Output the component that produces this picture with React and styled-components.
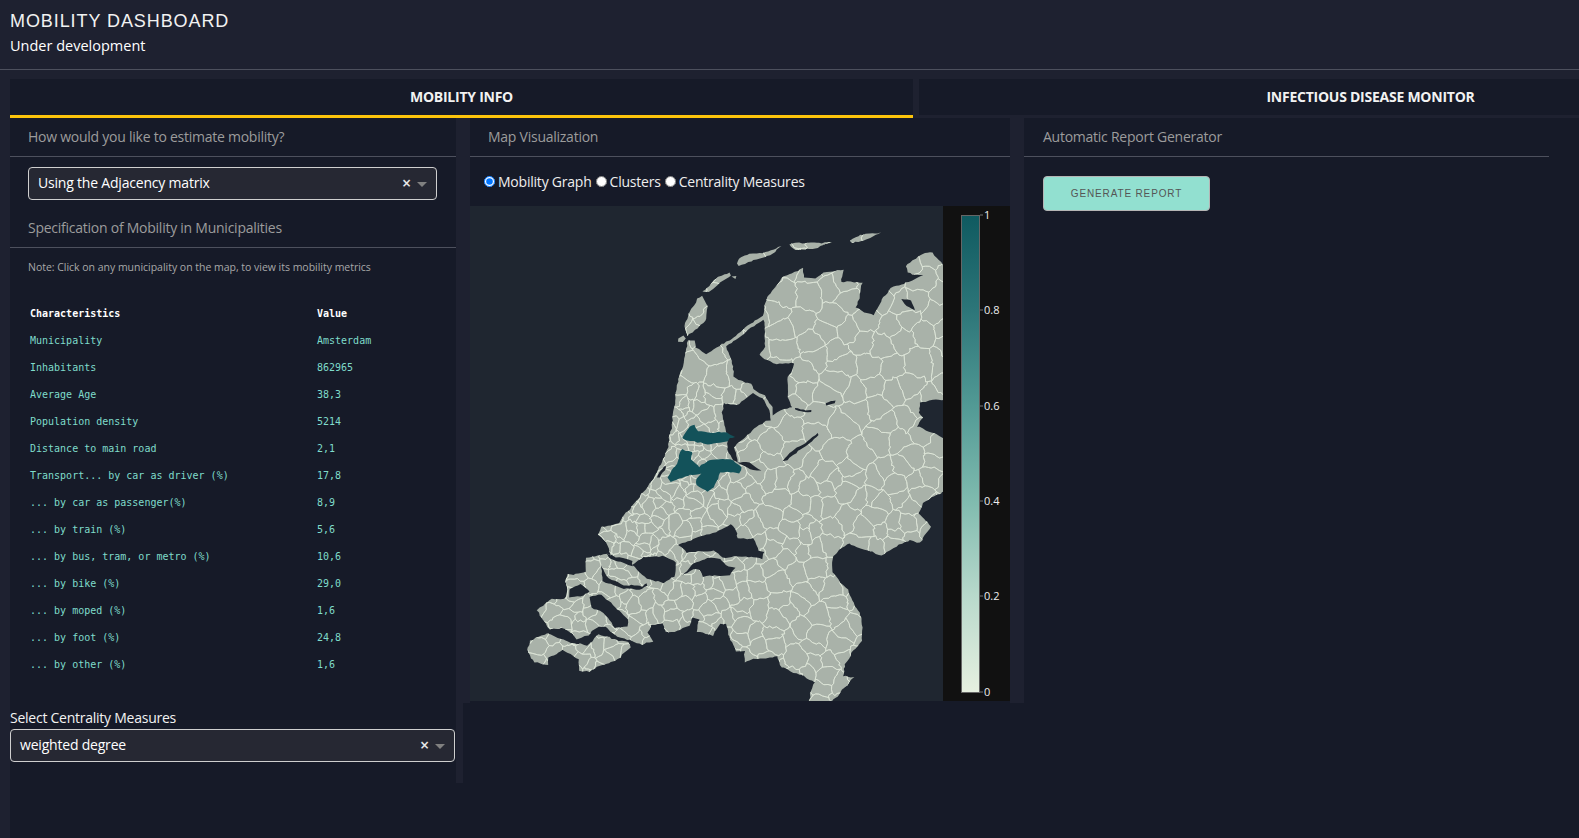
import React from 'react'
import styled, { createGlobalStyle } from 'styled-components'

const GlobalStyle = createGlobalStyle`
  html, body {
    margin: 0;
    height: 100%;
    overflow: hidden;
    background: #1e2130;
  }
  * { box-sizing: border-box; }
`

const Page = styled.div`
  width: 1579px;
  height: 838px;
  overflow: hidden;
  background: #1e2130;
  color: #fff;
  font-family: 'Open Sans', sans-serif;
`

const Banner = styled.header`
  height: 70px;
  padding: 11px 10px 0;
  border-bottom: 1px solid #4d505d;
`

const Title = styled.h1`
  margin: 0;
  font-family: 'Liberation Sans', Arial, sans-serif;
  font-size: 18px;
  font-weight: 400;
  line-height: 20px;
  letter-spacing: 0.92px;
  color: #f2f2f2;
`

const Subtitle = styled.p`
  margin: 5px 0 0;
  font-size: 14.5px;
  line-height: 19px;
`

const Board = styled.div`
  height: 768px;
  margin: 9px 0 0 10px;
  background: #161a28;
`

const Tabs = styled.div`
  display: flex;
  width: 1812px;
  gap: 6px;
  background: #1e2130;
`

const Tab = styled.div`
  width: 903px;
  height: 39px;
  border-bottom: 3px solid ${(p) => (p.$active ? '#fcc40b' : '#1e2130')};
  background: #161a28;
  background-clip: padding-box;
  font-size: 14px;
  font-weight: 700;
  line-height: 35px;
  text-align: center;
  color: #f2f2f2;
  letter-spacing: -0.25px;
`

const Columns = styled.div`
  display: flex;
  align-items: flex-start;
`

const LeftColumn = styled.section`
  width: 453px;
  height: 665px;
  border-right: 7px solid #1e2130;
`

const MiddleColumn = styled.section`
  width: 561px;
  height: 585px;
  border-left: 7px solid #1e2130;
  border-right: 14px solid #1e2130;
`

const RightColumn = styled.section`
  width: 525px;
`

const SectionTitle = styled.div`
  height: 39px;
  padding-left: ${(p) => p.$inset || 18}px;
  border-bottom: 1px solid #4d505d;
  font-size: 14px;
  line-height: 37px;
  letter-spacing: -0.25px;
  color: #9c9c9c;
`

const SelectBox = styled.div`
  display: flex;
  align-items: center;
  height: 33px;
  padding: 0 9px 2px;
  border: 1px solid #cfcfcf;
  border-radius: 4px;
  background: #262833;
  font-size: 14px;
  letter-spacing: -0.2px;
  color: #fff;
`

const MethodSelect = styled(SelectBox)`
  width: 409px;
  margin: 10px 0 9px 18px;
`

const SelectValue = styled.span`
  flex: 1;
`

const ClearMark = styled.span`
  font-size: 16px;
  font-weight: 600;
  line-height: 16px;
  margin-right: 3px;
  color: #e8e8e8;
`

const Caret = styled.span`
  width: 0;
  height: 0;
  margin: 3px 0 0 3px;
  border-left: 5px solid transparent;
  border-right: 5px solid transparent;
  border-top: 5px solid #808080;
`

const Note = styled.p`
  margin: 0;
  padding: 12px 0 0 18px;
  font-size: 10.5px;
  line-height: 15px;
  letter-spacing: -0.02px;
  color: #a8a8a8;
`

const MetricsTable = styled.table`
  margin: 25px 0 0 20px;
  border-collapse: collapse;
  font-family: 'DejaVu Sans Mono', monospace;
  font-size: 10px;
`

const MetricCell = styled.td`
  width: ${(p) => p.$width}px;
  height: 27px;
  padding: 0;
  color: ${(p) => (p.$head ? '#ffffff' : '#7fdccb')};
  font-weight: ${(p) => (p.$head ? 700 : 400)};
`

const FieldLabel = styled.label`
  display: block;
  margin-top: 30px;
  font-size: 14px;
  line-height: 19px;
  letter-spacing: -0.25px;
  color: #f2f2f2;
`

const CentralitySelect = styled(SelectBox)`
  width: 445px;
  margin-top: 2px;
`

const RadioRow = styled.div`
  display: flex;
  align-items: center;
  height: 49px;
  padding-left: 14px;
  font-size: 14px;
  letter-spacing: -0.22px;
  color: #eee;
`

const RadioLabel = styled.label`
  display: flex;
  align-items: center;
  margin-right: 4px;
`

const Radio = styled.input`
  width: 11px;
  height: 11px;
  margin: 0 3px 0 0;
`

const MapFigure = styled.svg`
  display: block;
  width: 540px;
  height: 495px;
`

const GenerateButton = styled.button`
  display: block;
  width: 167px;
  height: 35px;
  margin: 19px 0 0 19px;
  border: 1px solid #b5b5b5;
  border-radius: 4px;
  background: #92e0d0;
  font-family: 'Liberation Sans', Arial, sans-serif;
  font-size: 10px;
  letter-spacing: 0.85px;
  color: #555;
`

const rows = [
  ['Municipality', 'Amsterdam'],
  ['Inhabitants', '862965'],
  ['Average Age', '38,3'],
  ['Population density', '5214'],
  ['Distance to main road', '2,1'],
  ['Transport... by car as driver (%)', '17,8'],
  ['... by car as passenger(%)', '8,9'],
  ['... by train (%)', '5,6'],
  ['... by bus, tram, or metro (%)', '10,6'],
  ['... by bike (%)', '29,0'],
  ['... by moped (%)', '1,6'],
  ['... by foot (%)', '24,8'],
  ['... by other (%)', '1,6'],
]

// Map outlines, in page coordinates
const mainland = [
  [687, 340], [696, 340], [697, 347], [705, 353], [722, 345], [725, 345], [762, 316], [767, 298],
  [783, 277], [803, 268], [805, 277], [815, 278], [823, 273], [844, 270], [842, 283], [862, 282],
  [857, 307], [873, 315], [878, 307], [883, 297], [890, 287], [910, 283], [923, 275], [907, 272],
  [905, 265], [925, 253], [933, 252], [945, 267], [945, 400], [920, 402], [920, 413], [923, 417],
  [917, 427], [945, 439], [945, 490], [923, 502], [917, 513], [932, 527], [920, 542], [910, 540],
  [890, 550], [882, 555], [867, 550], [857, 548], [850, 543], [833, 555], [833, 572], [840, 583],
  [848, 590], [860, 613], [862, 640], [845, 663], [843, 677], [855, 677], [832, 703], [808, 703],
  [815, 682], [807, 677], [793, 672], [783, 667], [777, 655], [757, 660], [745, 662], [745, 652],
  [735, 652], [730, 640], [727, 623], [720, 623], [712, 636], [697, 632], [700, 620], [693, 617],
  [690, 627], [677, 630], [665, 632], [663, 622], [653, 625], [648, 633], [653, 642], [642, 644],
  [633, 641], [615, 635], [607, 627], [598, 626], [588, 636], [577, 638], [565, 628], [550, 628],
  [537, 610], [552, 599], [565, 598], [568, 590], [566, 582], [568, 574], [585, 572], [587, 558],
  [603, 553], [610, 555], [607, 545], [599, 535], [602, 527], [618, 523], [625, 513], [643, 493],
  [657, 473], [667, 450], [670, 430], [678, 383], [686, 357],
]

const islands = [
  [[702, 297], [708, 307], [707, 317], [700, 328], [687, 336], [684, 327], [688, 313], [697, 300]],
  [[678, 337], [682, 335], [685, 338], [682, 342], [678, 341]],
  [[702, 292], [713, 280], [730, 273], [732, 276], [720, 283], [708, 292]],
  [[733, 276], [737, 275], [736, 278]],
  [[737, 263], [742, 257], [782, 247], [773, 253], [740, 266]],
  [[790, 245], [795, 242], [832, 243], [813, 248], [795, 251]],
  [[850, 239], [855, 236], [881, 233], [867, 239], [853, 243]],
  [[530, 640], [548, 634], [563, 640], [587, 645], [598, 635], [613, 639], [628, 642], [630, 647],
    [620, 657], [600, 667], [590, 672], [578, 670], [578, 660], [563, 650], [548, 657], [547, 665],
    [535, 663], [528, 650]],
]

const waters = [
  [[727, 347], [763, 319], [765, 330], [765, 347], [760, 355], [773, 363], [795, 363], [788, 380],
    [788, 397], [792, 407], [783, 409], [773, 415], [773, 408], [764, 396], [754, 390], [752, 383],
    [743, 382], [733, 377], [732, 360]],
  [[753, 394], [762, 399], [770, 411], [771, 420], [767, 420], [740, 440], [733, 448], [738, 462],
    [733, 460], [727, 450], [727, 430], [722, 413], [723, 403], [737, 405]],
  [[738, 462], [750, 463], [760, 471], [756, 471], [745, 466]],
  [[783, 460], [795, 449], [817, 433], [818, 435], [798, 451], [788, 460]],
  [[795, 408], [812, 410], [812, 412], [795, 410]],
  [[825, 404], [835, 400], [835, 403], [826, 406]],
  [[902, 298], [911, 300], [914, 309], [907, 306]],
  [[657, 478], [664, 466], [667, 465], [661, 478]],
  [[632, 565], [643, 558], [663, 555], [675, 562], [675, 577], [663, 583], [647, 578]],
  [[605, 553], [632, 561], [632, 566], [608, 557]],
  [[677, 545], [690, 540], [713, 533], [730, 524], [737, 530], [738, 538], [753, 538], [758, 550],
    [765, 552], [762, 559], [745, 557], [723, 557], [713, 550], [687, 553]],
  [[683, 575], [692, 565], [707, 558], [720, 558], [727, 565], [735, 567], [730, 576], [703, 576],
    [700, 570], [693, 569]],
  [[590, 597], [602, 595], [615, 607], [628, 620], [628, 627], [615, 627], [603, 613], [592, 607]],
  [[570, 590], [580, 584], [590, 592], [580, 597], [569, 597]],
  [[600, 565], [607, 577], [623, 586], [643, 586], [647, 582], [648, 585], [640, 590], [623, 589],
    [603, 581]],
]

const highlighted = [
  [[683, 437], [690, 427], [695, 425], [698, 432], [710, 433], [728, 432], [732, 435], [735, 437],
    [730, 438], [727, 442], [717, 443], [708, 445], [700, 442], [687, 440]],
  [[682, 450], [692, 452], [690, 460], [700, 468], [710, 460], [722, 458], [733, 460], [742, 467],
    [740, 473], [727, 472], [720, 473], [713, 487], [707, 492], [697, 485], [697, 478], [702, 473],
    [690, 475], [670, 482], [668, 478], [677, 463]],
]

const wobble = (x, y) => [
  Math.sin(x * 0.17 + y * 0.09) * 1.2 + Math.sin(x * 0.41 - y * 0.23) * 0.8 + Math.sin(y * 0.93 + x * 0.31) * 0.5 + Math.sin(x * 1.9 + y * 1.3) * 0.5,
  Math.sin(y * 0.19 - x * 0.11) * 1.2 + Math.sin(y * 0.37 + x * 0.29) * 0.8 + Math.sin(x * 0.87 - y * 0.33) * 0.5 + Math.sin(y * 1.7 - x * 1.4) * 0.5,
]

// Closed polygon to a path, edges split up and shaken so they look hand-surveyed
const polygonPath = (points, amount = 1, step = 4) => {
  let d = ''
  points.forEach((a, i) => {
    const b = points[(i + 1) % points.length]
    const n = Math.max(1, Math.round(Math.hypot(b[0] - a[0], b[1] - a[1]) / step))
    for (let k = 0; k < n; k++) {
      const x = a[0] + ((b[0] - a[0]) * k) / n
      const y = a[1] + ((b[1] - a[1]) * k) / n
      const [dx, dy] = wobble(x, y)
      d += `${d ? 'L' : 'M'}${(x + dx * amount).toFixed(1)} ${(y + dy * amount).toFixed(1)}`
    }
  })
  return d + 'Z'
}

const makeRandom = (seed) => () => {
  seed = (seed + 0x6d2b79f5) | 0
  let t = Math.imul(seed ^ (seed >>> 15), 1 | seed)
  t = (t + Math.imul(t ^ (t >>> 7), 61 | t)) ^ t
  return ((t ^ (t >>> 14)) >>> 0) / 4294967296
}

const spacingAt = (x, y) => {
  if (x < 700 && y > 390 && y < 560) return 8
  if (x < 745 && y > 390) return 12
  if (y > 470) return 17
  return 24
}

// Municipal borders: a Voronoi split of the land
const municipalityBorders = () => {
  const random = makeRandom(71)
  const sites = []
  for (let i = 0; i < 12000; i++) {
    const x = 520 + random() * 430
    const y = 225 + random() * 485
    const r = spacingAt(x, y) * (0.6 + random() * 0.9)
    if (sites.every((s) => Math.hypot(s[0] - x, s[1] - y) > r)) sites.push([x, y])
  }
  return sites
    .map((site) => {
      let cell = [[500, 200], [960, 200], [960, 720], [500, 720]]
      sites.forEach((other) => {
        if (other === site) return
        const mx = (site[0] + other[0]) / 2
        const my = (site[1] + other[1]) / 2
        const nx = other[0] - site[0]
        const ny = other[1] - site[1]
        const side = (p) => (p[0] - mx) * nx + (p[1] - my) * ny
        const next = []
        cell.forEach((p, i) => {
          const q = cell[(i + 1) % cell.length]
          const sp = side(p)
          const sq = side(q)
          if (sp <= 0) next.push(p)
          if (sp * sq < 0) {
            const t = sp / (sp - sq)
            next.push([p[0] + (q[0] - p[0]) * t, p[1] + (q[1] - p[1]) * t])
          }
        })
        cell = next
      })
      return polygonPath(cell, 1.3, 3)
    })
    .join('')
}

const landPath = [mainland, ...islands].map((p) => polygonPath(p, 0.6, 3)).join('')
const waterPath = waters.map((p) => polygonPath(p, 0.5, 3)).join('')
const highlightPath = highlighted.map((p) => polygonPath(p, 0.5, 3)).join('')
const borderPath = municipalityBorders()

const ticks = [
  ['1', 215],
  ['0.8', 310],
  ['0.6', 406],
  ['0.4', 501],
  ['0.2', 596],
  ['0', 692],
]

const MobilityMap = () => (
  <MapFigure viewBox="470 206 540 495">
    <defs>
      <clipPath id="land">
        <path d={landPath} />
      </clipPath>
      <linearGradient id="scale" x1="0" y1="1" x2="0" y2="0">
        <stop offset="0" stopColor="#e6f0e0" />
        <stop offset="0.2" stopColor="#b9d9cc" />
        <stop offset="0.4" stopColor="#80bbaf" />
        <stop offset="0.6" stopColor="#529a95" />
        <stop offset="0.8" stopColor="#2d7679" />
        <stop offset="1" stopColor="#0f5a60" />
      </linearGradient>
    </defs>
    <rect x="470" y="206" width="473" height="495" fill="#1f2630" />
    <path d={landPath} fill="#a9b2a9" />
    <g clipPath="url(#land)">
      <path d={borderPath} fill="none" stroke="#dfe7da" strokeWidth="0.75" />
      <path d={waterPath} fill="#1f2630" />
    </g>
    <path d={highlightPath} fill="#13525a" />
    <rect x="943" y="206" width="67" height="495" fill="#111111" />
    <rect x="961.5" y="215.5" width="18" height="477" fill="url(#scale)" stroke="#666" />
    {ticks.map(([label, y]) => (
      <g key={label}>
        <line x1="980" x2="983" y1={y} y2={y} stroke="#777" />
        <text x="984" y={y + 4} fontSize="11" fontFamily="'Open Sans', sans-serif" fill="#eeeeee">
          {label}
        </text>
      </g>
    ))}
  </MapFigure>
)

const App = () => (
  <Page>
    <GlobalStyle />
    <Banner>
      <Title>MOBILITY DASHBOARD</Title>
      <Subtitle>Under development</Subtitle>
    </Banner>
    <Board>
      <Tabs>
        <Tab $active>MOBILITY INFO</Tab>
        <Tab>INFECTIOUS DISEASE MONITOR</Tab>
      </Tabs>
      <Columns>
        <LeftColumn>
          <SectionTitle>How would you like to estimate mobility?</SectionTitle>
          <MethodSelect>
            <SelectValue>Using the Adjacency matrix</SelectValue>
            <ClearMark>×</ClearMark>
            <Caret />
          </MethodSelect>
          <SectionTitle>Specification of Mobility in Municipalities</SectionTitle>
          <Note>Note: Click on any municipality on the map, to view its mobility metrics</Note>
          <MetricsTable>
            <tbody>
              <tr>
                <MetricCell $head $width={287}>Characteristics</MetricCell>
                <MetricCell $head $width={100}>Value</MetricCell>
              </tr>
              {rows.map(([name, value]) => (
                <tr key={name}>
                  <MetricCell $width={287}>{name}</MetricCell>
                  <MetricCell $width={100}>{value}</MetricCell>
                </tr>
              ))}
            </tbody>
          </MetricsTable>
          <FieldLabel>Select Centrality Measures</FieldLabel>
          <CentralitySelect>
            <SelectValue>weighted degree</SelectValue>
            <ClearMark>×</ClearMark>
            <Caret />
          </CentralitySelect>
        </LeftColumn>
        <MiddleColumn>
          <SectionTitle $inset={18}>Map Visualization</SectionTitle>
          <RadioRow>
            <RadioLabel>
              <Radio type="radio" name="view" defaultChecked />
              Mobility Graph
            </RadioLabel>
            <RadioLabel>
              <Radio type="radio" name="view" />
              Clusters
            </RadioLabel>
            <RadioLabel>
              <Radio type="radio" name="view" />
              Centrality Measures
            </RadioLabel>
          </RadioRow>
          <MobilityMap />
        </MiddleColumn>
        <RightColumn>
          <SectionTitle $inset={19}>Automatic Report Generator</SectionTitle>
          <GenerateButton>GENERATE REPORT</GenerateButton>
        </RightColumn>
      </Columns>
    </Board>
  </Page>
)

export default App
